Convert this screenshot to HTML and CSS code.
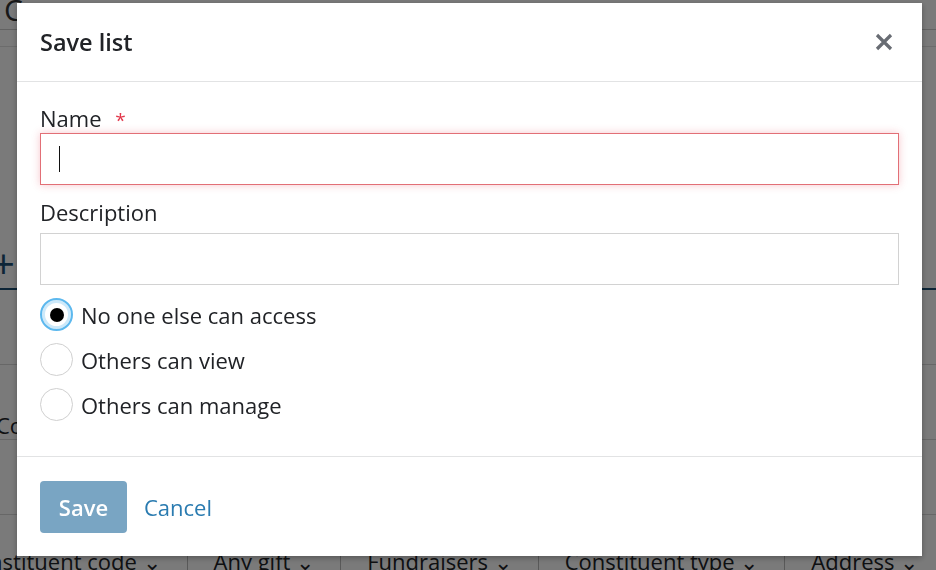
FILE: index.html
```html
<html>
    <head>
        <link rel="stylesheet" href="styles.css">
    </head>
    <body>
        <div class="page">
            <div class="topbar"><span class="top-letter">C</span></div>
            <div class="subbar"></div>
            <div class="tools"><span class="plus">+</span></div>
            <div class="rows">
                <div class="row"></div>
                <div class="row"><span class="row-text">Constituents</span></div>
                <div class="row"></div>
            </div>
            <div class="filters">
                <span class="filter">Constituent code &#8964;</span>
                <span class="filter">Any gift &#8964;</span>
                <span class="filter">Fundraisers &#8964;</span>
                <span class="filter">Constituent type &#8964;</span>
                <span class="filter">Address &#8964;</span>
            </div>
        </div>

        <div class="overlay">
            <div class="modal">
                <div class="modal-header">
                    <h2 class="modal-title">Save list</h2>
                    <button class="close" type="button">
                        <svg width="18" height="18" viewBox="0 0 18 18">
                            <path d="M2 2 L16 16 M16 2 L2 16" stroke="#686c73" stroke-width="3.2" stroke-linecap="butt"/>
                        </svg>
                    </button>
                </div>
                <div class="modal-body">
                    <label class="label name-label">Name <span class="required">*</span></label>
                    <div class="input invalid"><span class="caret"></span></div>
                    <label class="label desc-label">Description</label>
                    <div class="input"></div>
                    <div class="radios">
                        <div class="radio-row">
                            <span class="radio checked"></span>
                            <span class="radio-text">No one else can access</span>
                        </div>
                        <div class="radio-row">
                            <span class="radio"></span>
                            <span class="radio-text">Others can view</span>
                        </div>
                        <div class="radio-row">
                            <span class="radio"></span>
                            <span class="radio-text">Others can manage</span>
                        </div>
                    </div>
                </div>
                <div class="modal-footer">
                    <button class="save" type="button">Save</button>
                    <a class="cancel" href="#">Cancel</a>
                </div>
            </div>
        </div>
    </body>
</html>
```

FILE: styles.css
```css
* {
    margin: 0;
    padding: 0;
    box-sizing: border-box;
}

html,body {
    height: 100%;
    overflow: hidden;
}

body {
    font-family: "Open Sans", sans-serif;
    color: #212327;
    background: #fff;
}

/* page behind the dialog */

.page {
    height: 100%;
    display: flex;
    flex-direction: column;
}

.topbar {
    height: 30px;
    border-bottom: 1px solid #cdcdcd;
    padding-left: 4px;
}

.top-letter {
    font-size: 30px;
    line-height: 20px;
    color: #333;
}

.subbar {
    height: 17px;
    border-bottom: 1px solid #e2e2e2;
}

.tools {
    height: 243px;
    border-bottom: 2px solid #1c4f73;
    display: flex;
    align-items: flex-end;
    padding-bottom: 4px;
}

.plus {
    font-size: 40px;
    line-height: 40px;
    color: #1c4f73;
    margin-left: -8px;
}

.rows {
    flex: 1;
}

.row {
    height: 75px;
    border-bottom: 1px solid #d8d8d8;
    padding-top: 45px;
}

.row-text {
    font-size: 22px;
    margin-left: -4px;
}

.filters {
    height: 24px;
    display: flex;
    font-size: 22px;
    line-height: 30px;
    margin-left: -64px;
    white-space: nowrap;
}

.filter {
    padding: 0 26px;
    border-right: 1px solid #bbb;
}

.overlay {
    position: fixed;
    top: 0;
    left: 0;
    right: 0;
    bottom: 0;
    background: rgba(0, 0, 0, 0.52);
    display: flex;
    justify-content: center;
    padding-top: 3px;
    padding-left: 3px;
}

/* dialog */

.modal {
    width: 905px;
    height: 553px;
    background: #fff;
    display: flex;
    flex-direction: column;
    box-shadow: 0 2px 6px rgba(0, 0, 0, 0.3);
}

.modal-header {
    height: 79px;
    border-bottom: 1px solid #e2e3e4;
    display: flex;
    align-items: center;
    justify-content: space-between;
    padding: 0 29px 0 23px;
}

.modal-title {
    font-size: 23.5px;
    font-weight: 600;
    color: #212327;
}

.close {
    border: none;
    background: none;
    width: 18px;
    height: 18px;
    display: flex;
}

.modal-body {
    flex: 1;
    padding: 23px 23px 0 23px;
    border-bottom: 1px solid #e2e3e4;
}

.label {
    display: block;
    font-size: 22px;
    line-height: 29px;
}

.name-label {
    line-height: 26px;
}

.desc-label {
    margin-top: 13px;
    margin-bottom: 6px;
}

.required {
    color: #e2374b;
    margin-left: 8px;
    font-size: 19px;
}

.input {
    height: 52px;
    border: 1px solid #d2d2d2;
    display: flex;
    align-items: center;
    padding-left: 18px;
}

.input.invalid {
    border-color: #e26f76;
    box-shadow: 0 0 8px rgba(226, 55, 75, 0.28);
}

.caret {
    width: 1px;
    height: 26px;
    background: #111;
}

.radios {
    display: flex;
    flex-direction: column;
    gap: 12px;
    margin-top: 13px;
}

.radio-row {
    display: flex;
    align-items: center;
    gap: 8px;
}

.radio {
    width: 33px;
    height: 33px;
    border-radius: 50%;
    border: 1px solid #d0d0d0;
    background: #fff;
    display: flex;
    align-items: center;
    justify-content: center;
}

.radio.checked {
    border: 2px solid #5cb8ee;
    box-shadow: inset 0 0 0 3px #cde9fa;
}

.radio.checked::after {
    content: "";
    width: 14px;
    height: 14px;
    border-radius: 50%;
    background: #000;
}

.radio-text {
    font-size: 22px;
    line-height: 30px;
}

.modal-footer {
    height: 99px;
    display: flex;
    align-items: center;
    padding: 1px 23px 0 23px;
    gap: 17px;
}

.save {
    width: 87px;
    height: 52px;
    border: none;
    border-radius: 4px;
    background: #79a5c3;
    color: #fff;
    font-family: "Open Sans", sans-serif;
    font-size: 22px;
    font-weight: 600;
}

.cancel {
    font-size: 22px;
    color: #2a7bb0;
    text-decoration: none;
}
```
